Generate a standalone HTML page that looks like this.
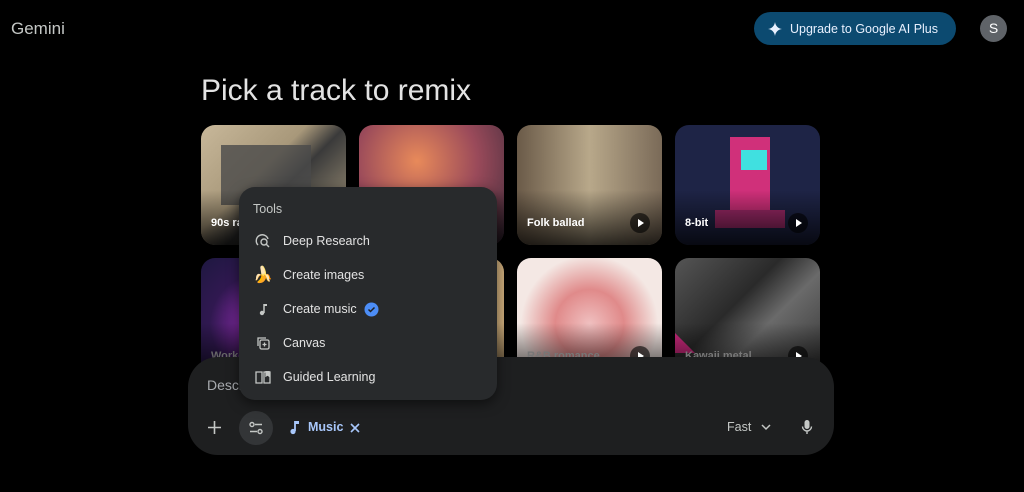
<!DOCTYPE html>
<html><head><meta charset="utf-8"><style>
*{margin:0;padding:0;box-sizing:border-box}
body{width:1024px;height:492px;background:#000;font-family:"Liberation Sans",sans-serif;color:#e3e3e3;position:relative;overflow:hidden}
.abs{position:absolute}
.card{position:absolute;width:145px;height:120px;border-radius:14px;overflow:hidden}
.card .sh{position:absolute;left:0;right:0;bottom:0;height:55px;background:linear-gradient(transparent,rgba(0,0,0,.75))}
.card .lb{position:absolute;left:10px;bottom:16px;font-size:11px;font-weight:bold;color:#fff}
.card .pl{position:absolute;right:12px;bottom:12px;width:20px;height:20px;border-radius:50%;background:rgba(0,0,0,.6)}
.card .pl:after{content:"";position:absolute;left:8px;top:6px;border-left:6px solid #fff;border-top:4px solid transparent;border-bottom:4px solid transparent}
.mi{position:absolute;left:0;height:34px;display:flex;align-items:center;font-size:12.5px;color:#e3e3e3}
.mi svg{position:absolute;left:16px}
.mi span{position:absolute;left:44px;white-space:nowrap}
</style></head><body>
<div class="abs" style="left:11px;top:19px;font-size:17px;color:#c4c7c5">Gemini</div>
<div class="abs" style="left:754px;top:12px;width:202px;height:33px;border-radius:17px;background:#0c4a70;display:flex;align-items:center;padding-left:14px;font-size:12.5px;color:#e8f0fe">
<svg width="14" height="14" viewBox="0 0 16 16" style="margin-right:8px"><path d="M8 0C8.6 4.5 11.5 7.4 16 8 11.5 8.6 8.6 11.5 8 16 7.4 11.5 4.5 8.6 0 8 4.5 7.4 7.4 4.5 8 0Z" fill="#e8f0fe"/></svg>Upgrade to Google AI Plus</div>
<div class="abs" style="left:980px;top:15px;width:27px;height:27px;border-radius:50%;background:#5f6368;color:#fff;font-size:14px;text-align:center;line-height:27px">S</div>
<div class="abs" style="left:201px;top:74px;font-size:30px;color:#e3e3e3">Pick a track to remix</div>

<div class="card" style="left:201px;top:125px;background:linear-gradient(135deg,#c8b89a,#a8987a 40%,#3a3a3a 55%,#b8a888)"><div class="abs" style="left:20px;top:20px;width:90px;height:60px;background:#4a4a4a;opacity:.8"></div><div class="sh"></div><div class="lb">90s rap</div></div>
<div class="card" style="left:359px;top:125px;background:radial-gradient(circle at 40% 30%,#e88a5a,#9a4a5a 50%,#3a2a3a)"><div class="sh"></div></div>
<div class="card" style="left:517px;top:125px;background:linear-gradient(90deg,#6a5a48,#b8a88a 50%,#7a6a58)"><div class="sh"></div><div class="lb">Folk ballad</div><div class="pl"></div></div>
<div class="card" style="left:675px;top:125px;background:#1e2446"><div class="abs" style="left:55px;top:12px;width:40px;height:80px;background:#d0307a"></div><div class="abs" style="left:66px;top:25px;width:26px;height:20px;background:#40e0e0"></div><div class="abs" style="left:40px;top:85px;width:70px;height:18px;background:#a02a6a"></div><div class="sh"></div><div class="lb">8-bit</div><div class="pl"></div></div>

<div class="card" style="left:201px;top:258px;background:radial-gradient(circle at 40% 55%,#a030c0,#301850 45%,#141838)"><div class="sh"></div><div class="lb" style="color:#666">Workout</div></div>
<div class="card" style="left:359px;top:258px;background:#c8a878"><div class="sh"></div></div>
<div class="card" style="left:517px;top:258px;background:radial-gradient(circle at 50% 55%,#f0c0c0,#e08a8a 35%,#f4e8e4 70%)"><div class="sh"></div><div class="lb" style="color:#777">R&amp;B romance</div><div class="pl"></div></div>
<div class="card" style="left:675px;top:258px;background:linear-gradient(135deg,#555,#2a2a2a 40%,#6a6a6a 60%,#333)"><div class="abs" style="left:0;top:75px;border-left:20px solid #d02a80;border-top:20px solid transparent"></div><div class="sh"></div><div class="lb" style="color:#777">Kawaii metal</div><div class="pl"></div></div>

<div class="abs" style="left:188px;top:357px;width:646px;height:98px;border-radius:30px;background:#1e1f20"></div>
<div class="abs" style="left:207px;top:377px;font-size:14px;color:#a8abaf">Describe your song</div>
<svg class="abs" style="left:207px;top:420px" width="15" height="15" viewBox="0 0 15 15"><path d="M7.5 1v13M1 7.5h13" stroke="#c4c7c5" stroke-width="1.6"/></svg>
<div class="abs" style="left:239px;top:411px;width:34px;height:34px;border-radius:50%;background:#333537"></div>
<svg class="abs" style="left:248px;top:420px" width="16" height="16" viewBox="0 0 16 16" fill="none" stroke="#c4c7c5" stroke-width="1.4"><circle cx="4" cy="4.5" r="2"/><path d="M7 4.5h7M2 11.5h7"/><circle cx="12" cy="11.5" r="2"/></svg>
<svg class="abs" style="left:289px;top:420px" width="12" height="15" viewBox="0 0 12 15"><path d="M6 1v10" stroke="#a8c7fa" stroke-width="1.8"/><circle cx="4" cy="11.5" r="2.6" fill="#a8c7fa"/><path d="M6 1h4v3H6z" fill="#a8c7fa"/></svg>
<div class="abs" style="left:308px;top:420px;font-size:12.5px;color:#a8c7fa;font-weight:bold">Music</div>
<svg class="abs" style="left:350px;top:423px" width="10" height="10" viewBox="0 0 10 10"><path d="M1 1l8 8M9 1l-8 8" stroke="#a8c7fa" stroke-width="1.6"/></svg>
<div class="abs" style="left:727px;top:420px;font-size:12.5px;color:#c4c7c5">Fast</div>
<svg class="abs" style="left:761px;top:423px" width="10" height="8" viewBox="0 0 10 8"><path d="M1 2l4 4 4-4" stroke="#c4c7c5" stroke-width="1.5" fill="none"/></svg>
<svg class="abs" style="left:801px;top:419px" width="12" height="16" viewBox="0 0 12 16"><rect x="3.5" y="1" width="5" height="9" rx="2.5" fill="#c4c7c5"/><path d="M1.5 7.5a4.5 4.5 0 009 0M6 12v3" stroke="#c4c7c5" stroke-width="1.4" fill="none"/></svg>

<div class="abs" style="left:239px;top:187px;width:258px;height:213px;border-radius:16px;background:#282a2c;box-shadow:0 4px 12px rgba(0,0,0,.5)">
<div class="abs" style="left:14px;top:15px;font-size:12.5px;color:#c4c7c5">Tools</div>
<div class="mi" style="top:37px;width:258px"><svg width="16" height="16" viewBox="0 0 16 16" fill="none" stroke="#c4c7c5" stroke-width="1.4"><path d="M13 6A6 6 0 103 12"/><circle cx="9" cy="9" r="3"/><path d="M11 11l3 3"/></svg><span>Deep Research</span></div>
<div class="mi" style="top:71px;width:258px"><span style="left:14px;font-size:16px">🍌</span><span>Create images</span></div>
<div class="mi" style="top:105px;width:258px"><svg width="16" height="16" viewBox="0 0 16 16"><path d="M9 3v9" stroke="#c4c7c5" stroke-width="1.5"/><circle cx="7" cy="12" r="2.2" fill="#c4c7c5"/><path d="M9 3h3v2H9z" fill="#c4c7c5"/></svg><span>Create music</span>
<svg style="left:125px" width="15" height="15" viewBox="0 0 15 15"><circle cx="7.5" cy="7.5" r="7" fill="#4c8df6"/><path d="M4.5 7.5l2 2 4-4" stroke="#1e1f20" stroke-width="1.5" fill="none"/></svg></div>
<div class="mi" style="top:139px;width:258px"><svg width="16" height="16" viewBox="0 0 16 16" fill="none" stroke="#c4c7c5" stroke-width="1.3"><path d="M3 11V3h8"/><rect x="5" y="5" width="9" height="9" rx="1.5"/><path d="M9.5 7.5v4M7.5 9.5h4"/></svg><span>Canvas</span></div>
<div class="mi" style="top:173px;width:258px"><svg width="16" height="16" viewBox="0 0 16 16" fill="none" stroke="#c4c7c5" stroke-width="1.3"><path d="M1 3h6v11H1zM9 3h6v11H9z"/><path d="M11 2v5l1.5-1L14 7V2" fill="#c4c7c5"/></svg><span>Guided Learning</span></div>
</div>
</body></html>
